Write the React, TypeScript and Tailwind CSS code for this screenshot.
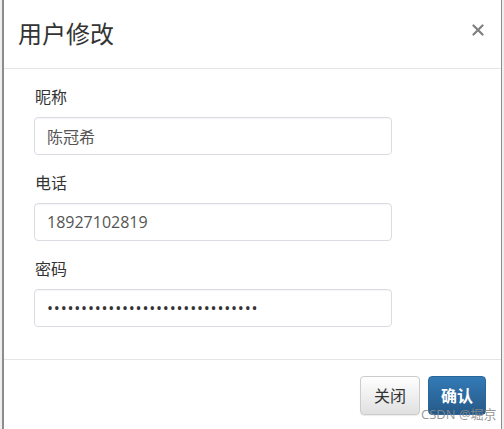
import React from 'react';

const font = { fontFamily: '"Open Sans", "Noto Sans CJK SC", sans-serif' };

function Field({ label, value, type = 'text' }: { label: string; value: string; type?: string }) {
  return (
    <div className="flex flex-col">
      <label className="text-[16px] leading-[22px] text-[#333] pl-[1px]">{label}</label>
      <input
        readOnly
        type={type}
        value={value}
        style={font}
        className={`mt-[9px] w-[358px] h-[38px] rounded-[4px] border border-[#d9dde3] bg-white px-[12px] text-[16px] outline-none shadow-[inset_0_1px_1px_rgba(0,0,0,0.04)] ${
          type === 'password' ? 'tracking-[0.8px] text-[#333]' : 'text-[#555]'
        }`}
      />
    </div>
  );
}

export default function App() {
  return (
    <div className="relative w-[504px] h-[429px] bg-[#efefef] pl-[2px] overflow-hidden" style={font}>
      <div className="w-[500px] h-[429px] bg-white border-l-2 border-r-[1px] border-[#8c8c8c] flex flex-col">
        {/* Header */}
        <div className="h-[69px] border-b border-[#e5e5e5] flex items-center justify-between pl-[14px] pr-[16px]">
          <h4 className="text-[24px] text-[#333] leading-none pb-[1px]">用户修改</h4>
          <button type="button" className="w-[12px] h-[12px] mr-[1px] mb-[8px]">
            <svg viewBox="0 0 12 12" className="w-[12px] h-[12px]">
              <path d="M1.5 1.5 L10.5 10.5 M10.5 1.5 L1.5 10.5" stroke="#7f7f7f" strokeWidth="2.2" strokeLinecap="round" />
            </svg>
          </button>
        </div>

        {/* Body */}
        <div className="pt-[17px] pl-[30px] flex flex-col gap-[17px]">
          <Field label="昵称" value="陈冠希" />
          <Field label="电话" value="18927102819" />
          <Field label="密码" type="password" value="1234567890123456789012345678901" />
        </div>

        {/* Footer */}
        <div className="mt-[32px] border-t border-[#e5e5e5] flex justify-end gap-[8px] pt-[16px] pr-[15px]">
          <button
            type="button"
            className="w-[60px] h-[39px] rounded-[4px] border border-[#cccccc] bg-gradient-to-b from-white to-[#e0e0e0] text-[16px] text-[#333] shadow-[0_1px_1px_rgba(0,0,0,0.08)]"
          >
            关闭
          </button>
          <button
            type="button"
            className="w-[58px] h-[39px] rounded-[4px] border border-[#2b669a] bg-gradient-to-b from-[#337ab7] to-[#265a88] text-[16px] font-bold text-white"
          >
            确认
          </button>
        </div>
      </div>

      {/* Watermark */}
      <div className="absolute left-[421px] top-[406px] text-[13px] leading-[16px] text-[#8a8a8a]/90 whitespace-nowrap">
        CSDN @堀京
      </div>
    </div>
  );
}
